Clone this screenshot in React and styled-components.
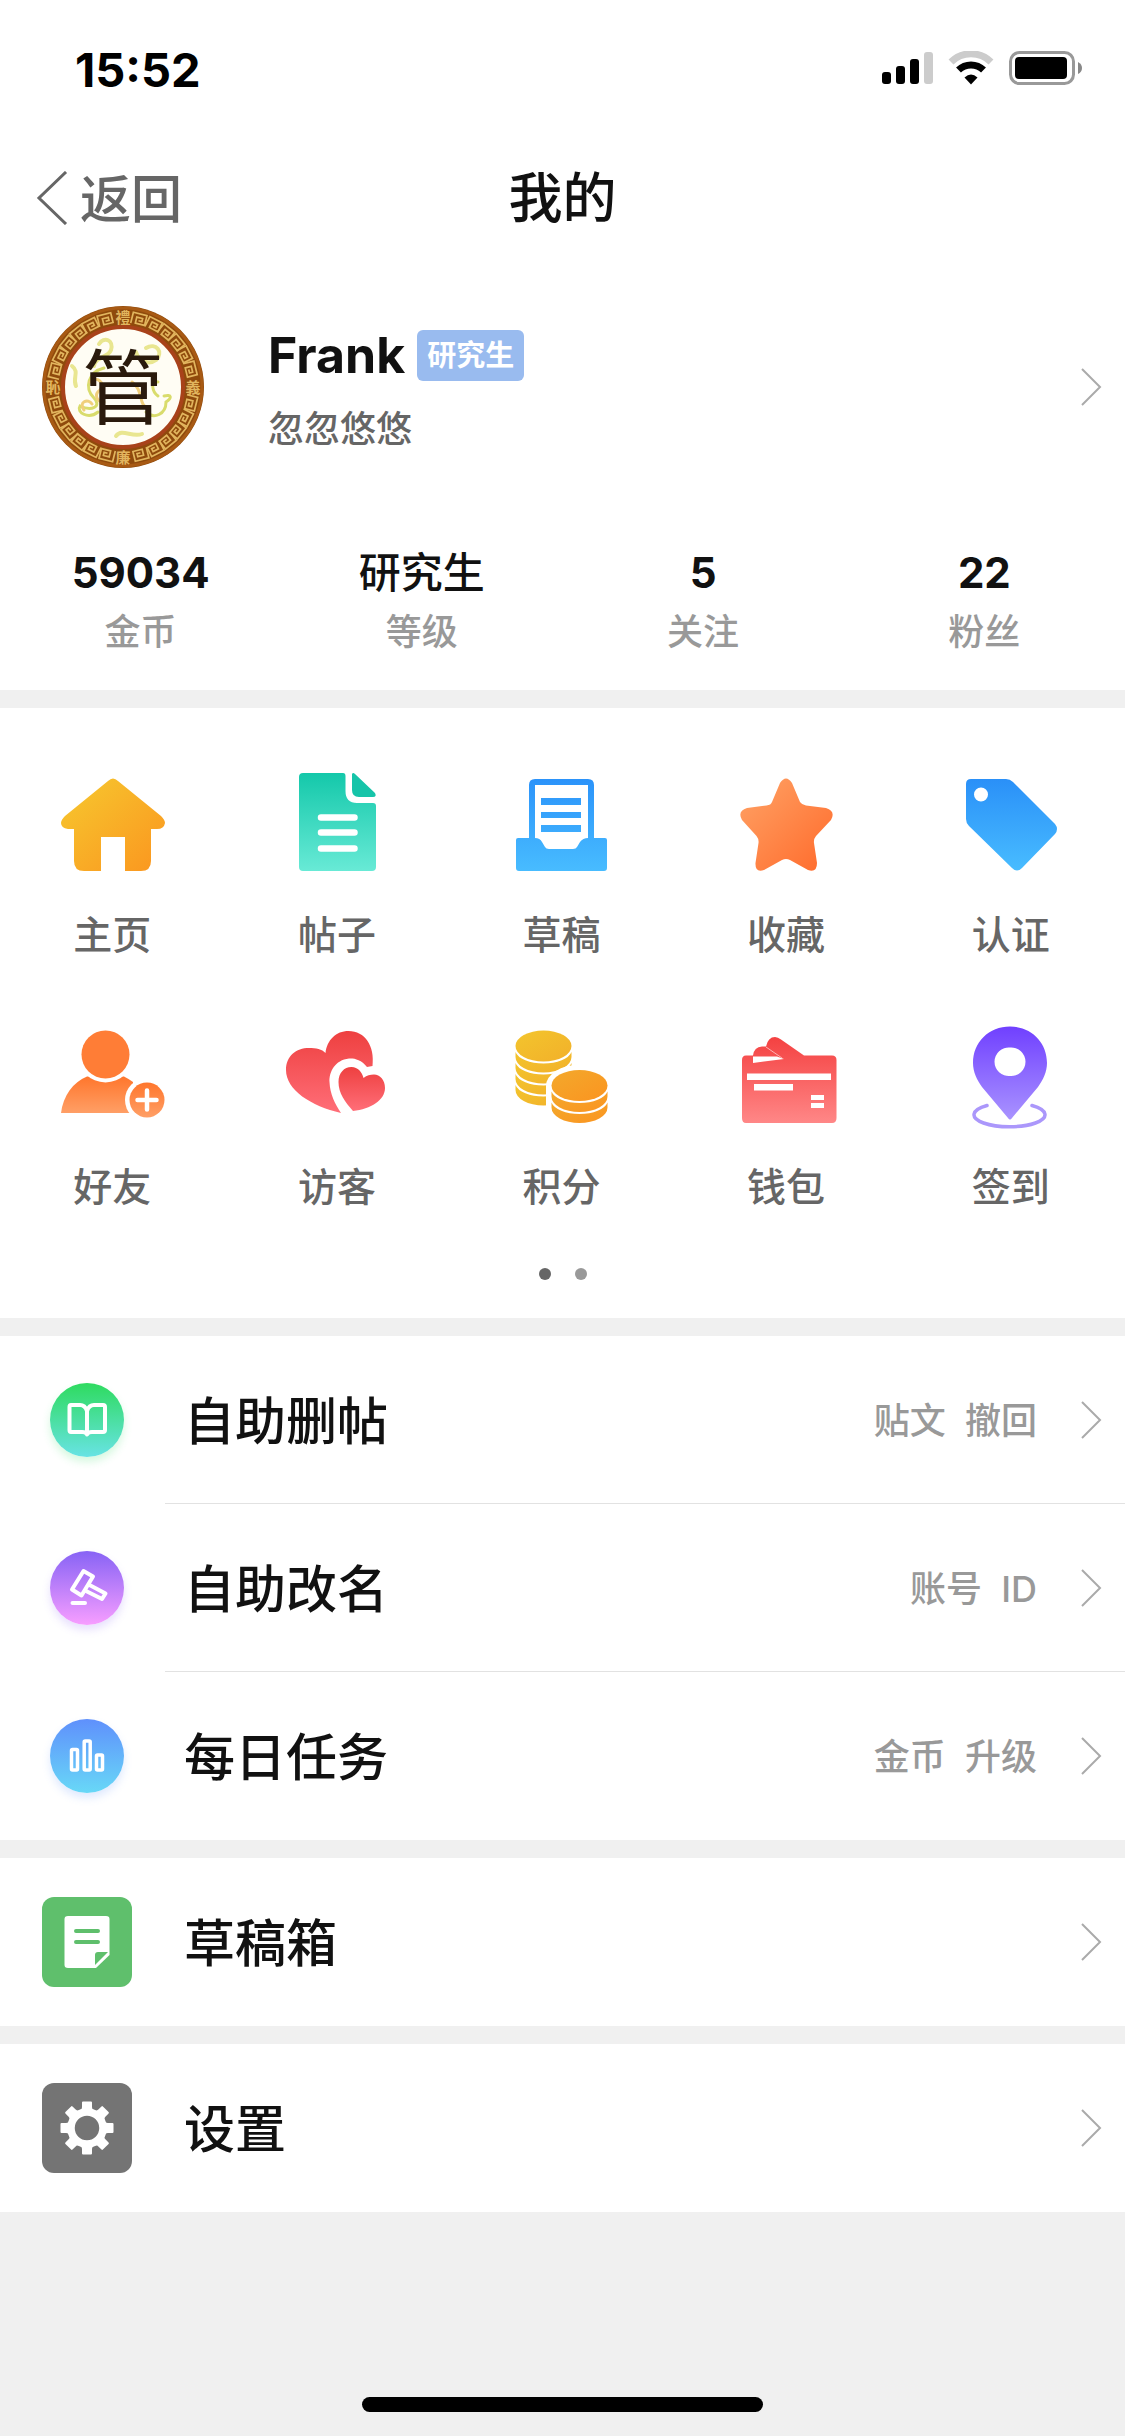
import React from "react";
import styled, { createGlobalStyle, css } from "styled-components";

const GlobalStyle = createGlobalStyle`
  * {
    box-sizing: border-box;
  }
  body {
    margin: 0;
    background: #f0f0f0;
    color: #111;
    font-family: Inter, "Noto Sans CJK SC", sans-serif;
    font-weight: 500;
  }
  a {
    color: inherit;
    text-decoration: none;
  }
  svg {
    display: block;
    flex: none;
  }
`;

const Fade = ({ id, from, to, diagonal }) => (
  <defs>
    <linearGradient id={id} x1="0" y1="0" x2={diagonal ? "1" : "0"} y2="1">
      <stop offset="0" stopColor={from} />
      <stop offset="1" stopColor={to} />
    </linearGradient>
  </defs>
);

/* ---------- status bar ---------- */

const StatusIcons = () => (
  <svg width="204" height="36" viewBox="0 0 204 36" aria-hidden="true">
    <rect x="0" y="21" width="9" height="12" rx="3" />
    <rect x="14" y="15" width="9" height="18" rx="3" />
    <rect x="28" y="8" width="9" height="25" rx="3" />
    <rect x="42" y="1" width="9" height="32" rx="3" fill="#ccc" />
    <path d="M69 11 A28.500 28.500 0 0 1 109 11" fill="none" stroke="#ccc" strokeWidth="7" />
    <path d="M76.500 19 A18 18 0 0 1 101.500 19" fill="none" stroke="#000" strokeWidth="7" />
    <path d="M82.500 26.500 Q89 20.500 95.500 26.500 L89 33.500 Z" />
    <rect x="128.500" y="1.500" width="63" height="31" rx="9" fill="none" stroke="#999" strokeWidth="3" />
    <rect x="133" y="6" width="52" height="22" rx="4" />
    <path d="M196 11 Q200 13 200 17 Q200 21 196 23 Z" fill="#888" />
  </svg>
);

/* ---------- avatar ---------- */

const keyAngles = [14, 27, 39, 51, 63, 76];

const AvatarArt = () => (
  <svg width="162" height="162" viewBox="0 0 162 162" role="img" aria-label="Frank">
    <circle cx="81" cy="81" r="81" fill="#8f4a0c" />
    <circle cx="81" cy="81" r="79" fill="none" stroke="#a85a14" strokeWidth="3" />
    <circle cx="81" cy="81" r="60" fill="#fffdf4" stroke="#a8421a" strokeWidth="4" />
    <g fill="none" stroke="#e2b55e" strokeWidth="1.700">
      {[0, 90, 180, 270].map((base) =>
        keyAngles.map((a) => (
          <path
            key={base + a}
            transform={`rotate(${base + a} 81 81)`}
            d="M73 17 V6 H87 V16 H77.500 V9.800 H83.500 V13 H80"
          />
        ))
      )}
    </g>
    <g fill="#e2b55e" fontSize="15" fontWeight="700" textAnchor="middle">
      <text x="81" y="17">禮</text>
      <text x="151" y="87">義</text>
      <text x="81" y="157">廉</text>
      <text x="11" y="87">恥</text>
    </g>
    <g fill="none" strokeLinecap="round">
      <g stroke="#e9e690" strokeWidth="4">
        <path d="M57 38 C62 30 72 34 69 44 C66 52 54 50 52 60" />
        <path d="M104 42 C114 36 122 46 114 54 C106 60 96 54 94 46" />
        <path d="M30 60 C38 66 30 72 34 80" />
        <path d="M74 130 C80 122 90 132 100 128" />
      </g>
      <g stroke="#d9dc6c" strokeWidth="3">
        <path d="M62 62 C46 66 42 82 52 92 C60 100 50 106 38 100 C34 106 46 114 56 106" />
        <path d="M104 106 C112 114 124 108 124 96 C130 92 130 88 122 90" />
        <path d="M116 76 C108 74 110 86 116 90" />
      </g>
      <g stroke="#f0cf7c" strokeWidth="3">
        <path d="M48 76 C54 70 64 76 58 84 C52 88 54 96 62 96" />
        <path d="M42 104 C36 96 46 92 50 98" />
        <path d="M90 76 C102 84 96 100 106 102" />
      </g>
    </g>
    <text x="81" y="112" fontSize="82" fontWeight="400" textAnchor="middle" fill="#2a1a0c">
      管
    </text>
  </svg>
);

/* ---------- menu icons ---------- */

const HomeIcon = () => (
  <>
    <Fade id="home" from="#f6c92f" to="#fb951f" diagonal />
    <path
      fill="url(#home)"
      d="M52 13 Q57 8 62 13 L105 48 Q109 52 109 55 Q108 61 101 61 H95 V93 Q95 103 85 103 H69 V69 H45 V103 H28 Q18 103 18 93 V61 H12 Q5 60 5 55 Q5 52 9 48 Z"
    />
  </>
);

const PostIcon = () => (
  <>
    <Fade id="post" from="#14c8aa" to="#68ead6" />
    <path
      fill="url(#post)"
      d="M22 5 H62 Q64.500 5 64.500 8 V23 Q64.500 35 76 35 H92 Q95 35 95 38 V99 Q95 103 91 103 H22 Q18 103 18 99 V9 Q18 5 22 5 Z"
    />
    <path fill="#16c4a9" d="M71 6 Q72 4 74 6 L94 25 Q96 29 92 29 H78 Q71 29 71 22 Z" />
    <path d="M40 49.500 H73.500 M40 64.500 H73.500 M40 80.500 H73.500" stroke="#fff" strokeWidth="6.500" strokeLinecap="round" />
  </>
);

const DraftIcon = () => (
  <>
    <Fade id="draft" from="#2b93fa" to="#48bcff" />
    <path
      fill="url(#draft)"
      fillRule="evenodd"
      d="M11 72 Q11 70 13 70 H24 V17 Q24 11 30 11 H83 Q89 11 89 17 V70 H100 Q102 70 102 72 V100 Q102 103 99 103 H14 Q11 103 11 100 Z M30 17 V70 Q35 70 37 74 L40 79 Q41 81 44 81 H68 Q71 81 72 79 L75 74 Q78 70 83 70 V17 Z M36 30 H76 V37 H36 Z M36 44 H76 V50 H36 Z M36 57 H76 V64 H36 Z"
    />
  </>
);

const StarIcon = () => (
  <>
    <Fade id="star" from="#ffa366" to="#ff6a2b" diagonal />
    <path
      fill="url(#star)"
      d="M50 15 Q56 6 62 15 L70 34 Q72 37 76 37.500 L96 40 Q106 43 101 52 L86 68 Q83.500 71 84 75 L87 95 Q87 105 78 102 L60 92 Q56 90 52 92 L34 102 Q25 105 25.500 95 L28.500 75 Q29 71 26.500 68 L12 52 Q7 43 17 40 L36.500 37.500 Q41 37 42 34 Z"
    />
  </>
);

const TagIcon = () => (
  <>
    <Fade id="tag" from="#2a90f8" to="#48bcff" />
    <path
      fill="url(#tag)"
      fillRule="evenodd"
      d="M16 11 H51 Q55 11 58 14 L100 56 Q104 61 100 66 L67 100 Q62 105 57 100 L14 58 Q11 55 11 51 V16 Q11 11 16 11 Z M26 19.500 A7 7 0 1 0 26 33.500 A7 7 0 1 0 26 19.500 Z"
    />
  </>
);

const FriendIcon = () => (
  <>
    <Fade id="friend" from="#ff762c" to="#ff9f66" />
    <path fill="url(#friend)" d="M5 93 C7 76 17 62 31 56.500 H68 Q73 59 77 62 V93 Z" />
    <circle cx="49.500" cy="34.500" r="28" fill="#fff" />
    <circle cx="49.500" cy="34.500" r="24" fill="#ff7d36" />
    <circle cx="91" cy="80" r="22" fill="#fff" />
    <circle cx="91" cy="80" r="17.500" fill="url(#friend)" />
    <path d="M81.500 80 H100.500 M91 70.500 V89.500" stroke="#fff" strokeWidth="4.500" strokeLinecap="round" />
  </>
);

const VisitorIcon = () => (
  <>
    <Fade id="visitor" from="#ee4040" to="#ff6e78" />
    <path
      fill="url(#visitor)"
      d="M60 93 C30 86 5 70 5 50 C5 36 15 28 28 28 C35 28 41 29 44.500 33 C46 20 55 11 67.500 11 C84 11 94 26 91.500 46 L86 47 C80 39 72 38 68 38.500 C54 40 48 52 48.500 62 C49 74 54 84 60 93 Z"
    />
    <path
      fill="url(#visitor)"
      d="M72 91 C64 82 57.500 73 57.500 62 C57.500 53 63 47 70.500 47 C77 47 81 52 82.500 58 C86 55 89 54.500 93 54.500 C99 54.500 104 60 104 68 C104 80 90 89 72 91 Z"
    />
  </>
);

const PointsIcon = () => (
  <>
    <Fade id="points" from="#f3c52d" to="#f2b02a" diagonal />
    <Fade id="coins" from="#f3a92c" to="#fb9420" diagonal />
    <g fill="url(#points)">
      <ellipse cx="38.500" cy="26" rx="28" ry="15.500" />
      {[0, 11, 22, 33].map((y) => (
        <path key={y} transform={`translate(0 ${y})`} d="M10.500 32 V37 A28 15.500 0 0 0 66.500 37 V32 A28.500 14 0 0 1 10.500 32 Z" />
      ))}
    </g>
    <path fill="#fff" d="M41 66 A33 21 0 0 1 108 66 V108 H41 Z" />
    <g fill="url(#coins)">
      <ellipse cx="74.500" cy="65.500" rx="28" ry="15.500" />
      {[0, 11].map((y) => (
        <path key={y} transform={`translate(36 ${39.5 + y})`} d="M10.500 32 V37 A28 15.500 0 0 0 66.500 37 V32 A28.500 14 0 0 1 10.500 32 Z" />
      ))}
    </g>
  </>
);

const WalletIcon = () => (
  <>
    <Fade id="wallet" from="#f44141" to="#ff8787" />
    <path
      fill="url(#wallet)"
      d="M16 35.500 H23 Q24 27 32 26.500 H36 Q38 17 45 17 Q48 17 51 19.500 L74 35.500 H102 Q106.500 35.500 106.500 40 V98 Q106.500 103 102 103 H16 Q12 103 12 98 V40 Q12 35.500 16 35.500 Z"
    />
    <path fill="#fff" d="M23 36.500 H47 L54 39 L23 43 Z M17 53.500 H101 V60 H17 Z M24 64 H63 V70.500 H24 Z M81 75 H94 V80 H81 Z M81 83 H94 V88 H81 Z" />
    <path d="M36 27 L52 38" stroke="#ffb3b3" strokeWidth="1" />
  </>
);

const CheckinIcon = () => (
  <>
    <Fade id="checkin" from="#7040ff" to="#a993ff" />
    <path
      fill="url(#checkin)"
      fillRule="evenodd"
      d="M55 6.500 C76 6.500 92 22 92 43 C92 52 88 60 83 67 L57 98 Q55 101 53 98 L27 67 C22 60 18 52 18 43 C18 22 34 6.500 55 6.500 Z M55 27.500 A14.300 14.300 0 1 0 55 56 A14.300 14.300 0 1 0 55 27.500 Z"
    />
    <path d="M32 85.500 A35.500 12 0 1 0 77 85.500" fill="none" stroke="#ab97fb" strokeWidth="3.500" strokeLinecap="round" />
  </>
);

/* ---------- list icons ---------- */

const BookIcon = () => (
  <svg width="74" height="74" viewBox="0 0 74 74" fill="none" stroke="#fff" strokeWidth="4" strokeLinejoin="round" strokeLinecap="round">
    <path d="M37 28 Q35 22 30 22 H21 Q19.500 22 19.500 24 V47 Q19.500 49 21 49 H32 Q36 49 37 51.500 Q38 49 42 49 H53 Q55 49 55 47 V24 Q55 22 53 22 H44 Q39 22 37 28 V51" />
  </svg>
);

const GavelIcon = () => (
  <svg width="74" height="74" viewBox="0 0 74 74" fill="none" stroke="#fff" strokeWidth="4" strokeLinejoin="round" strokeLinecap="round">
    <path d="M33.500 20 L43 25.500 L31.500 44.500 L22 38.500 Z" />
    <path d="M39.500 34 L55.500 42.500 L52 48 L36 40" />
    <path d="M22.500 52 H35" />
  </svg>
);

const ChartIcon = () => (
  <svg width="74" height="74" viewBox="0 0 74 74" fill="none" stroke="#fff" strokeWidth="3.500">
    <rect x="21.500" y="30.500" width="6" height="20.500" rx="1" />
    <rect x="34.200" y="22" width="6" height="29" rx="1" />
    <rect x="46.500" y="36" width="6" height="15" rx="1" />
  </svg>
);

const NoteIcon = () => (
  <svg width="90" height="90" viewBox="0 0 90 90">
    <path fill="#fff" d="M26 19 H64 Q67.500 19 67.500 22 V58 L54 71 H26 Q22.500 71 22.500 68 V22 Q22.500 19 26 19 Z" />
    <path fill="#5fbf6c" d="M56 55 H66 L53 68 V58 Q53 55 56 55 Z" />
    <path d="M34 34 H56 M34 45 H56" stroke="#5fbf6c" strokeWidth="4" strokeLinecap="round" />
  </svg>
);

const GearIcon = () => (
  <svg width="90" height="90" viewBox="0 0 90 90">
    <g fill="#fff">
      {[0, 45, 90, 135, 180, 225, 270, 315].map((a) => (
        <path key={a} transform={`rotate(${a} 45 45)`} d="M40 19.500 Q40 18.500 41 18.500 H49 Q50 18.500 50 19.500 V24 Q50 27 54 28 H36 Q40 27 40 24 Z" />
      ))}
    </g>
    <circle cx="45" cy="45" r="16" fill="none" stroke="#fff" strokeWidth="7.500" />
  </svg>
);

const Chevron = () => (
  <svg width="22" height="40" viewBox="0 0 22 40" fill="none" stroke="#aaa" strokeWidth="2" aria-hidden="true">
    <path d="M2 2 L20 20 L2 38" />
  </svg>
);

const stats = [
  { value: "59034", label: "金币", numeric: true },
  { value: "研究生", label: "等级" },
  { value: "5", label: "关注", numeric: true },
  { value: "22", label: "粉丝", numeric: true },
];

const menu = [
  { label: "主页", Icon: HomeIcon },
  { label: "帖子", Icon: PostIcon },
  { label: "草稿", Icon: DraftIcon },
  { label: "收藏", Icon: StarIcon },
  { label: "认证", Icon: TagIcon },
  { label: "好友", Icon: FriendIcon },
  { label: "访客", Icon: VisitorIcon },
  { label: "积分", Icon: PointsIcon },
  { label: "钱包", Icon: WalletIcon },
  { label: "签到", Icon: CheckinIcon },
];

const groups = [
  [
    { title: "自助删帖", note: "贴文  撤回", Icon: BookIcon, round: true, fill: "linear-gradient(#2edb5f, #68e3e4)", glow: "#2edb5f33" },
    { title: "自助改名", note: "账号  ID", Icon: GavelIcon, round: true, fill: "linear-gradient(#8763f5, #f79eff)", glow: "#8763f533" },
    { title: "每日任务", note: "金币  升级", Icon: ChartIcon, round: true, fill: "linear-gradient(#5f90fc, #68d8f7)", glow: "#5f90fc33" },
  ],
  [{ title: "草稿箱", Icon: NoteIcon, fill: "#5fbf6c" }],
  [{ title: "设置", Icon: GearIcon, fill: "#747474" }],
];

const App = () => {
  return (
    <Page>
      <GlobalStyle />
      <StatusBar>
        <time>15:52</time>
        <StatusIcons />
      </StatusBar>
      <NavBar>
        <BackButton type="button">
          <svg width="32" height="54" viewBox="0 0 32 54" fill="none" stroke="#666" strokeWidth="3" aria-hidden="true">
            <path d="M30 1 L3 27 L30 53" />
          </svg>
          <span>返回</span>
        </BackButton>
        <h1>我的</h1>
      </NavBar>

      <Profile href="#profile">
        <AvatarArt />
        <ProfileText>
          <NameLine>
            <strong>Frank</strong>
            <Badge>研究生</Badge>
          </NameLine>
          <p>忽忽悠悠</p>
        </ProfileText>
        <Chevron />
      </Profile>
      <Stats>
        {stats.map(({ value, label, numeric }) => (
          <Stat key={label} $numeric={numeric}>
            <dt>{label}</dt>
            <dd>{value}</dd>
          </Stat>
        ))}
      </Stats>

      <MenuPanel>
        <MenuGrid>
          {menu.map(({ label, Icon }) => (
            <MenuItem key={label} href={`#${label}`}>
              <svg width="112" height="112" viewBox="0 0 112 112" aria-hidden="true">
                <Icon />
              </svg>
              {label}
            </MenuItem>
          ))}
        </MenuGrid>
        <Dots>
          <Dot $active />
          <Dot />
        </Dots>
      </MenuPanel>

      {groups.map((rows) => (
        <Group key={rows[0].title}>
          {rows.map(({ title, note, Icon, round, fill, glow }) => (
            <Row key={title} href={`#${title}`}>
              <IconSlot>
                <IconTile $round={round} $fill={fill} $glow={glow}>
                  <Icon />
                </IconTile>
              </IconSlot>
              <RowBody>
                <h2>{title}</h2>
                {note && <Note>{note}</Note>}
                <Chevron />
              </RowBody>
            </Row>
          ))}
        </Group>
      ))}
      <HomeIndicator />
    </Page>
  );
};

const Page = styled.div`
  display: flex;
  flex-direction: column;
  min-height: 100vh;
`;

const StatusBar = styled.div`
  display: flex;
  align-items: center;
  justify-content: space-between;
  height: 132px;
  padding: 6px 39px 0 75px;
  background: #fff;
  time {
    font-size: 47px;
    font-weight: 700;
    color: #000;
  }
`;

const NavBar = styled.header`
  display: grid;
  grid-template-columns: 1fr auto 1fr;
  align-items: center;
  height: 132px;
  padding: 0 36px;
  background: #fff;
  h1 {
    margin: 0;
    padding-bottom: 8px;
    font-size: 54px;
    font-weight: 500;
  }
`;

const BackButton = styled.button`
  display: flex;
  align-items: center;
  gap: 12px;
  justify-self: start;
  padding: 0;
  border: 0;
  background: none;
  font: inherit;
  font-size: 51px;
  color: #666;
  span {
    padding-bottom: 4px;
  }
`;

const Profile = styled.a`
  display: flex;
  align-items: center;
  height: 246px;
  padding: 0 23px 0 42px;
  background: #fff;
`;

const ProfileText = styled.div`
  flex: 1;
  padding: 8px 0 0 64px;
  p {
    margin: 0;
    font-size: 36px;
    line-height: 72px;
    color: #666;
  }
`;

const NameLine = styled.div`
  display: flex;
  align-items: center;
  gap: 12px;
  strong {
    font-size: 50px;
    font-weight: 700;
    line-height: 76px;
  }
`;

const Badge = styled.span`
  padding: 0 10px;
  border-radius: 6px;
  background: #99bbef;
  color: #fff;
  font-size: 29px;
  font-weight: 700;
  line-height: 51px;
`;

const Stats = styled.dl`
  display: grid;
  grid-template-columns: repeat(4, 1fr);
  margin: 0;
  padding: 33px 0 29px;
  background: #fff;
`;

const Stat = styled.div`
  display: flex;
  flex-direction: column-reverse;
  text-align: center;
  dt {
    font-size: 36px;
    line-height: 58px;
    color: #999;
  }
  dd {
    margin: 0;
    font-size: 42px;
    font-weight: ${({ $numeric }) => ($numeric ? 700 : 500)};
    line-height: 60px;
  }
`;

const MenuPanel = styled.nav`
  margin-top: 18px;
  padding: 60px 0 38px;
  background: #fff;
`;

const MenuGrid = styled.div`
  display: grid;
  grid-template-columns: repeat(5, 1fr);
  row-gap: 58px;
  padding-right: 2px;
`;

const MenuItem = styled.a`
  display: flex;
  flex-direction: column;
  align-items: center;
  gap: 28px;
  font-size: 39px;
  line-height: 54px;
  color: #666;
`;

const Dots = styled.div`
  display: flex;
  justify-content: center;
  gap: 24px;
  margin-top: 54px;
`;

const Dot = styled.span`
  width: 12px;
  height: 12px;
  border-radius: 50%;
  background: ${({ $active }) => ($active ? "#666" : "#999")};
`;

const Group = styled.section`
  margin-top: 18px;
  background: #fff;
`;

const RowBody = styled.div`
  display: flex;
  flex: 1;
  align-items: center;
  height: 168px;
  padding: 0 23px 0 19px;
  h2 {
    flex: 1;
    margin: 0;
    padding-bottom: 4px;
    font-size: 51px;
    font-weight: 500;
  }
`;

const Row = styled.a`
  display: flex;
  align-items: center;
  padding-left: 42px;
  &:not(:last-child) ${RowBody} {
    border-bottom: 1px solid #e2e2e2;
  }
`;

const IconSlot = styled.div`
  display: flex;
  justify-content: center;
  width: 90px;
  margin-right: 33px;
`;

const IconTile = styled.span`
  border-radius: 12px;
  background: ${({ $fill }) => $fill};
  ${({ $round, $glow }) =>
    $round &&
    css`
      border-radius: 50%;
      box-shadow: 0 5px 8px ${$glow};
    `}
`;

const Note = styled.span`
  margin-right: 43px;
  padding-bottom: 4px;
  font-size: 36px;
  white-space: pre;
  color: #999;
`;

const HomeIndicator = styled.div`
  align-self: center;
  width: 401px;
  height: 15px;
  margin: auto 0 24px;
  border-radius: 8px;
  background: #000;
`;

export default App;
